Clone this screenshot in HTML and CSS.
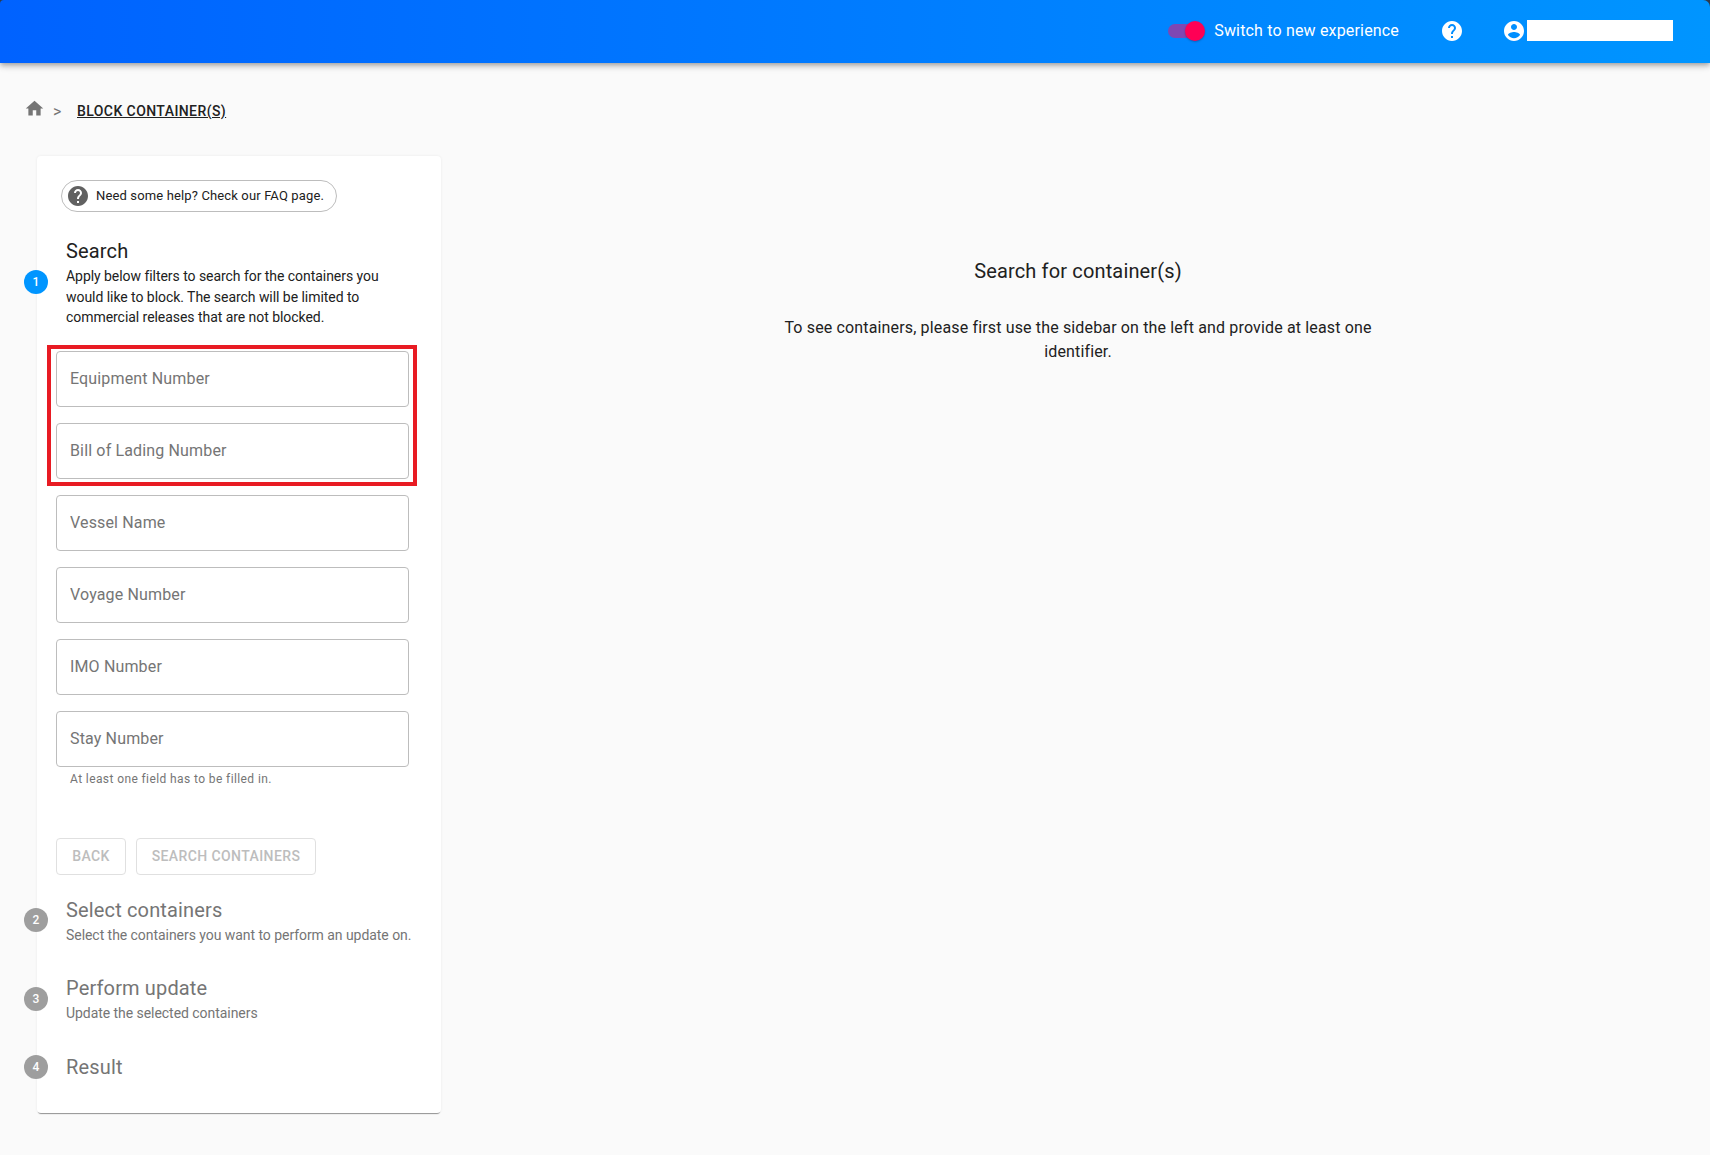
FILE: index.html
```html
<!DOCTYPE html>
<html lang="en">
<head>
<meta charset="utf-8">
<title>Block container(s)</title>
<link rel="stylesheet" href="styles.css">
</head>
<body>
<div class="topbar-frame">
<header class="topbar">
  <div class="switch"><span class="switch-track"></span><span class="switch-thumb"></span></div>
  <span class="switch-label">Switch to new experience</span>
  <svg class="icon-help" viewBox="0 0 24 24"><path d="M12 2C6.48 2 2 6.48 2 12s4.48 10 10 10 10-4.48 10-10S17.52 2 12 2zm1 17h-2v-2h2v2zm2.07-7.75l-.9.92C13.45 12.9 13 13.5 13 15h-2v-.5c0-1.1.45-2.1 1.17-2.83l1.24-1.26c.37-.36.59-.86.59-1.41 0-1.1-.9-2-2-2s-2 .9-2 2H8c0-2.21 1.79-4 4-4s4 1.79 4 4c0 .88-.36 1.68-.93 2.25z"/></svg>
  <svg class="icon-user" viewBox="0 0 24 24"><path d="M12 2C6.48 2 2 6.48 2 12s4.48 10 10 10 10-4.48 10-10S17.52 2 12 2zm0 3c1.66 0 3 1.34 3 3s-1.34 3-3 3-3-1.34-3-3 1.34-3 3-3zm0 14.2c-2.5 0-4.71-1.28-6-3.22.03-1.99 4-3.08 6-3.08 1.99 0 5.97 1.09 6 3.08-1.29 1.94-3.5 3.22-6 3.22z"/></svg>
  <div class="user-mask"></div>
</header>
</div>

<nav class="crumbs">
  <svg class="icon-home" viewBox="0 0 24 24"><path d="M10 20v-6h4v6h5v-8h3L12 3 2 12h3v8z"/></svg>
  <span class="crumb-sep">&gt;</span>
  <a class="crumb-link">BLOCK CONTAINER(S)</a>
</nav>

<main class="layout">
  <aside class="card">
    <div class="faq">
      <svg class="icon-faq" viewBox="2 2 20 20"><path d="M12 2C6.48 2 2 6.48 2 12s4.48 10 10 10 10-4.48 10-10S17.52 2 12 2zm1 17h-2v-2h2v2zm2.07-7.75l-.9.92C13.45 12.9 13 13.5 13 15h-2v-.5c0-1.1.45-2.1 1.17-2.83l1.24-1.26c.37-.36.59-.86.59-1.41 0-1.1-.9-2-2-2s-2 .9-2 2H8c0-2.21 1.79-4 4-4s4 1.79 4 4c0 .88-.36 1.68-.93 2.25z"/></svg>
      <span>Need some help? Check our FAQ page.</span>
    </div>

    <section class="step step-active">
      <span class="step-num num-active">1</span>
      <div class="step-body">
        <h2 class="step-title">Search</h2>
        <p class="step-desc">Apply below filters to search for the containers you would like to block. The search will be limited to commercial releases that are not blocked.</p>
      </div>
    </section>

    <form class="fields">
      <div class="highlight">
        <input class="field" placeholder="Equipment Number">
        <input class="field" placeholder="Bill of Lading Number">
      </div>
      <input class="field" placeholder="Vessel Name">
      <input class="field" placeholder="Voyage Number">
      <input class="field" placeholder="IMO Number">
      <input class="field" placeholder="Stay Number">
    </form>
    <p class="hint">At least one field has to be filled in.</p>

    <div class="actions">
      <button class="btn btn-back" disabled>BACK</button>
      <button class="btn btn-search" disabled>SEARCH CONTAINERS</button>
    </div>

    <section class="step step-two">
      <span class="step-num">2</span>
      <div class="step-body">
        <h2 class="step-title">Select containers</h2>
        <p class="step-desc">Select the containers you want to perform an update on.</p>
      </div>
    </section>
    <section class="step step-three">
      <span class="step-num">3</span>
      <div class="step-body">
        <h2 class="step-title">Perform update</h2>
        <p class="step-desc">Update the selected containers</p>
      </div>
    </section>
    <section class="step step-four">
      <span class="step-num">4</span>
      <div class="step-body">
        <h2 class="step-title">Result</h2>
      </div>
    </section>
  </aside>

  <section class="empty">
    <h1 class="empty-title">Search for container(s)</h1>
    <p class="empty-text">To see containers, please first use the sidebar on the left and provide at least one identifier.</p>
  </section>
</main>
</body>
</html>
```
FILE: styles.css
```css
* { box-sizing: border-box; }
html, body { margin: 0; height: 100%; }
body {
  background: #fafafa;
  font-family: Roboto, "Liberation Sans", sans-serif;
  color: #212121;
  height: 1155px;
  overflow: hidden;
}
.topbar-frame {
  background: #2e3a4a;
  box-shadow: 0 2px 4px -1px rgba(0,0,0,.2), 0 4px 5px rgba(0,0,0,.14), 0 1px 10px rgba(0,0,0,.12);
}
.topbar {
  height: 63px;
  display: flex;
  align-items: center;
  padding: 0 37px 1px 0;
  border-radius: 4px 7px 0 0;
  background: linear-gradient(90deg, #0062ff 0%, #0095ff 100%);
  color: #fff;
}
.switch { position: relative; width: 37px; height: 20px; margin-left: auto; margin-right: 9px; }
.switch-track {
  position: absolute; left: 0; top: 3px; width: 34px; height: 14px; border-radius: 7px;
  background: #7f47b3;
}
.switch-thumb {
  position: absolute; right: 0; top: 0; width: 20px; height: 20px; border-radius: 50%;
  background: #ff0055;
  box-shadow: 0 1px 2px rgba(0,0,0,.25);
}
.switch-label { font-size: 16px; line-height: 24px; letter-spacing: .17px; margin-right: 41px; }
.icon-help { width: 24px; height: 24px; fill: #fff; margin-right: 38px; }
.icon-user { width: 24px; height: 24px; fill: #fff; margin-right: 1px; }
.user-mask { width: 146px; height: 21px; margin-top: -1px; background: #fff; }

.crumbs {
  display: flex;
  align-items: center;
  height: 24px;
  margin: 36px 0 0 24px;
}
.icon-home { width: 21px; height: 21px; fill: #757575; margin-top: -6px; }
.crumb-sep { font-size: 16px; color: #757575; margin-left: 8px; width: 24px; }
.crumb-link { font-size: 14px; font-weight: 500; letter-spacing: .42px; text-decoration: underline; color: #212121; }

.layout { display: flex; margin-top: 33px; padding-left: 37px; }
.card {
  width: 404px;
  height: 957px;
  background: #fff;
  border-radius: 4px;
  box-shadow: 0 2px 1px -1px rgba(0,0,0,.4), 0 0 3px rgba(0,0,0,.07);
  padding-top: 24px;
}
.faq {
  display: inline-flex;
  align-items: center;
  margin-left: 24px;
  width: 276px;
  height: 32px;
  border: 1px solid #bdbdbd;
  border-radius: 16px;
  padding: 0 0 1px 6px;
  font-size: 13px;
  letter-spacing: .14px;
  color: #212121;
  vertical-align: top;
}
.icon-faq { width: 20px; height: 20px; fill: #616161; margin-right: 8px; flex: none; }

.step { display: flex; align-items: center; margin-left: -13px; }
.step-num {
  width: 24px; height: 24px; border-radius: 50%;
  background: #9e9e9e; color: #fff;
  font-size: 12px; font-weight: 500;
  display: flex; align-items: center; justify-content: center;
  flex: none; margin-right: 18px;
  position: relative;
}
.num-active { background: #0095ff; }
.step-body { min-width: 0; }
.step-title { margin: 0 0 1px; font-size: 20px; line-height: 28px; font-weight: 400; letter-spacing: .15px; color: #757575; }
.step-desc { margin: 0; font-size: 14px; line-height: 20.5px; letter-spacing: -.05px; color: #757575; width: 360px; }
.step-active { margin-top: 25px; }
.step-active .step-title { color: #212121; }
.step-active .step-desc { color: #212121; padding-right: 36px; }

.fields { display: flex; flex-direction: column; gap: 16px; margin: 23px 0 0 19px; width: 353px; }
.highlight {
  display: flex; flex-direction: column; gap: 16px;
  margin: -6px -8px -7px -9px;
  padding: 2px 4px 3px 5px;
  border: 4px solid #e81b23;
  width: 370px;
}
.field {
  display: block;
  width: 353px;
  height: 56px;
  border: 1px solid #bdbdbd;
  border-radius: 4px;
  background: #fff;
  padding: 0 13px;
  font: 400 16px Roboto, sans-serif;
  letter-spacing: .15px;
  flex: none;
}
.field::placeholder { color: #757575; opacity: 1; }
.hint { margin: 5px 0 0 33px; font-size: 12px; line-height: 14px; letter-spacing: .4px; color: #757575; }

.actions { display: flex; gap: 10px; margin: 52px 0 0 19px; }
.btn {
  height: 37px;
  border: 1px solid #e0e0e0;
  border-radius: 4px;
  background: #fff;
  color: #bdbdbd;
  font: 500 14px Roboto, sans-serif;
  letter-spacing: .4px;
  padding: 0 0 1px;
}
.btn-back { width: 70px; }
.btn-search { width: 180px; }
.step-two { margin-top: 21px; }
.step-three { margin-top: 29px; }
.step-four { margin-top: 29px; }

.empty { width: 590px; margin: 101px 0 0 342px; text-align: center; }
.empty-title { margin: 0; font-size: 20px; line-height: 28px; font-weight: 400; letter-spacing: .15px; color: #212121; }
.empty-text { margin: 31px 0 0; font-size: 16px; line-height: 24px; letter-spacing: .15px; color: #212121; }
```
